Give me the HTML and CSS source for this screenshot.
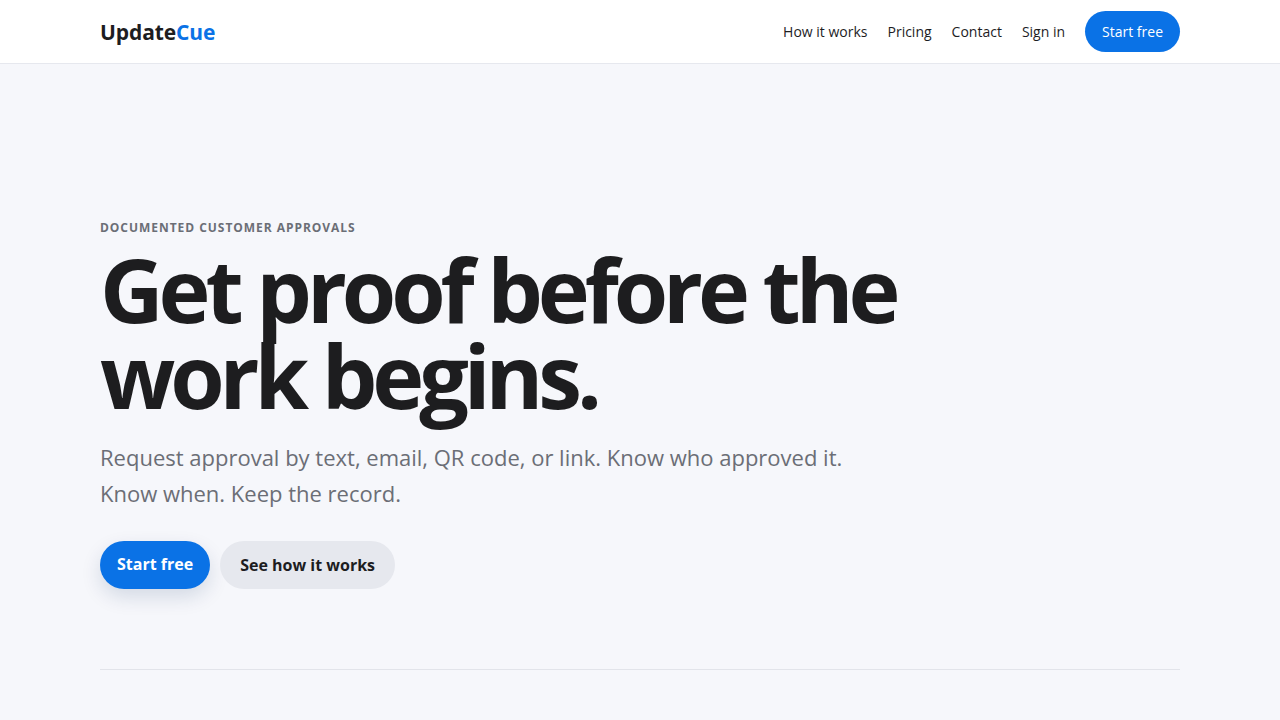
FILE: index.html
```html
<!DOCTYPE html>
<html lang="en">
<head>
<meta charset="utf-8">
<title>UpdateCue</title>
<link rel="stylesheet" href="styles.css">
</head>
<body>
<header class="site-header">
  <div class="container header-inner">
    <a class="logo" href="#">Update<span class="logo-accent">Cue</span></a>
    <nav class="nav">
      <a href="#">How it works</a>
      <a href="#">Pricing</a>
      <a href="#">Contact</a>
      <a href="#">Sign in</a>
      <a class="btn btn-primary btn-small" href="#">Start free</a>
    </nav>
  </div>
</header>
<main class="hero">
  <div class="container">
    <p class="eyebrow">Documented customer approvals</p>
    <h1 class="headline">Get proof before the<br>work begins.</h1>
    <p class="lead">Request approval by text, email, QR code, or link. Know who approved it.<br>Know when. Keep the record.</p>
    <div class="actions">
      <a class="btn btn-primary btn-large" href="#">Start free</a>
      <a class="btn btn-secondary btn-large" href="#">See how it works</a>
    </div>
    <hr class="divider">
  </div>
</main>
</body>
</html>
```
FILE: styles.css
```css
* { box-sizing: border-box; }
html, body { margin: 0; padding: 0; }
body {
  font-family: "Open Sans", "Noto Sans", sans-serif;
  background: #f6f7fb;
  color: #1d1d1f;
}
a { text-decoration: none; color: inherit; }
.container { width: 1080px; margin: 0 auto; }

.site-header {
  background: #ffffff;
  border-bottom: 1px solid #e6e8ee;
  height: 64px;
}
.header-inner {
  height: 63px;
  display: flex;
  align-items: center;
  justify-content: space-between;
}
.logo {
  font-size: 21px;
  font-weight: 700;
  color: #1d1d1f;
  letter-spacing: -0.1px;
}
.logo-accent { color: #0a72e6; }
.nav {
  display: flex;
  align-items: center;
  gap: 20px;
  font-size: 14px;
  color: #1d1d1f;
}
.btn {
  display: inline-flex;
  align-items: center;
  justify-content: center;
  border-radius: 999px;
}
.btn-primary { background: #0a72e6; color: #ffffff; }
.btn-small { height: 41px; padding: 0 17px; font-size: 14px; }
.btn-large { height: 48px; padding: 0 17px; font-size: 16px; font-weight: 700; }
.btn-primary.btn-large { box-shadow: 0 8px 20px rgba(10, 40, 90, 0.14); padding-bottom: 2px; }
.btn-secondary { background: #e6e8ee; color: #1d1d1f; padding: 0 20px; }

.hero { padding-top: 156px; }
.eyebrow {
  margin: 0;
  font-size: 12px;
  font-weight: 700;
  text-transform: uppercase;
  letter-spacing: 0.08em;
  color: #6b6e76;
  line-height: 16px;
}
.headline {
  margin: 10px 0 0;
  font-size: 88px;
  font-weight: 700;
  line-height: 86px;
  letter-spacing: -0.058em;
  color: #1d1d1f;
}
.lead {
  margin: 21px 0 0;
  font-size: 22px;
  line-height: 36px;
  color: #6b6e76;
}
.actions {
  margin-top: 30px;
  display: flex;
  gap: 10px;
}
.divider {
  margin: 80px 0 0;
  border: 0;
  border-top: 1px solid #e2e4ea;
}
```
